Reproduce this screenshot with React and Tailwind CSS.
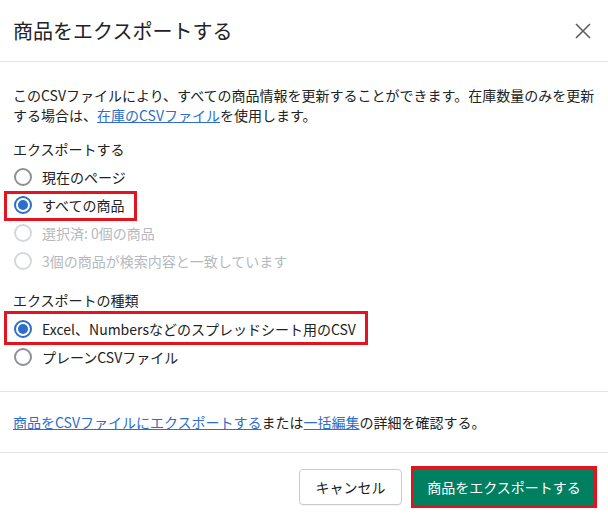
const font = { fontFamily: '"Noto Sans CJK JP", "Noto Sans", sans-serif' }

function Radio({ checked, disabled }) {
  if (checked) {
    return (
      <span className="flex h-[18px] w-[18px] shrink-0 items-center justify-center rounded-full border-2 border-[#2c6ecb] bg-white">
        <span className="h-[10px] w-[10px] rounded-full bg-[#2c6ecb]" />
      </span>
    )
  }
  return (
    <span
      className={
        'h-[18px] w-[18px] shrink-0 rounded-full border-2 bg-white ' +
        (disabled ? 'border-[#d5d8db]' : 'border-[#8c9196]')
      }
    />
  )
}

function Option({ label, checked, disabled, mark }) {
  return (
    <div className="relative flex h-[28px] w-fit items-center gap-[10px] pl-px">
      <Radio checked={checked} disabled={disabled} />
      <span className={'text-[14px] leading-[20px] ' + (disabled ? 'text-[#b5b9bd]' : 'text-[#202223]')}>
        {label}
      </span>
      {mark}
    </div>
  )
}

function Mark({ className }) {
  return <span className={'pointer-events-none absolute border-[3px] border-[#e3141e] ' + className} />
}

export default function App() {
  return (
    <div className="h-[519px] w-[608px] bg-white text-[#202223]" style={font}>
      <div className="flex h-[62px] items-center justify-between border-b border-[#e1e3e5] pl-[13px] pr-[17px]">
        <h2 className="text-[20px] leading-[28px] font-normal">商品をエクスポートする</h2>
        <svg width="16" height="16" viewBox="0 0 16 16" fill="none" stroke="#5c5f62" strokeWidth="1.6">
          <path d="M1 1l14 14M15 1L1 15" />
        </svg>
      </div>

      <div className="border-b border-[#e1e3e5] px-[13px] pt-[23px] pb-[20px]">
        <p className="text-[14px] leading-[20px]">
          このCSVファイルにより、すべての商品情報を更新することができます。在庫数量のみを更新する場合は、
          <a className="text-[#2c6ecb] underline">在庫のCSVファイル</a>を使用します。
        </p>

        <div className="mt-[14px] text-[14px] leading-[20px]">エクスポートする</div>
        <div className="mt-[4px]">
          <Option label="現在のページ" />
          <Option label="すべての商品" checked mark={<Mark className="-left-[9px] top-0 h-[30px] w-[133px]" />} />
          <Option label="選択済: 0個の商品" disabled />
          <Option label="3個の商品が検索内容と一致しています" disabled />
        </div>

        <div className="mt-[15px] text-[14px] leading-[20px]">エクスポートの種類</div>
        <div className="mt-[5px]">
          <Option
            label="Excel、Numbersなどのスプレッドシート用のCSV"
            checked
            mark={<Mark className="-left-[9px] -top-[4px] h-[34px] w-[364px]" />}
          />
          <Option label="プレーンCSVファイル" />
        </div>
      </div>

      <div className="border-b border-[#e1e3e5] px-[13px] pt-[20px] pb-[20px] text-[14px] leading-[20px]">
        <a className="text-[#2c6ecb] underline">商品をCSVファイルにエクスポートする</a>または
        <a className="text-[#2c6ecb] underline">一括編集</a>の詳細を確認する。
      </div>

      <div className="flex justify-end gap-[12px] pt-[16px] pr-[14px]">
        <button className="h-[36px] w-[103px] rounded-[4px] border border-[#c9cccf] bg-white text-[14px] text-[#202223] shadow-[0_1px_0_rgba(0,0,0,0.05)]">
          キャンセル
        </button>
        <button className="h-[36px] w-[180px] bg-[#008060] text-[14px] text-white outline-[3px] outline-solid outline-[#e3141e]">
          商品をエクスポートする
        </button>
      </div>
    </div>
  )
}
